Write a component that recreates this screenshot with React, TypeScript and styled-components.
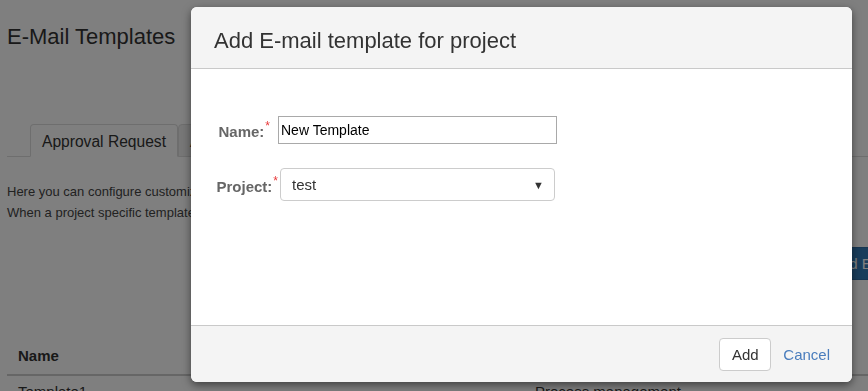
import React from "react";
import styled, { createGlobalStyle } from "styled-components";

const Global = createGlobalStyle`
  html, body {
    margin: 0;
    padding: 0;
    background: #ffffff;
    overflow: hidden;
    font-family: "Liberation Sans", Arial, sans-serif;
    color: #333;
  }
  * { box-sizing: border-box; }
`;

const Page = styled.div`
  width: 989px;
  padding: 0 7px;
`;

const Title = styled.h1`
  margin: 0;
  padding-top: 24px;
  font-size: 22px;
  font-weight: 400;
  line-height: 26px;
  color: #333;
`;

const TabBar = styled.ul`
  list-style: none;
  margin: 74px 0 0;
  padding: 0 0 0 23px;
  display: flex;
  border-bottom: 1px solid #ddd;
`;

const Tab = styled.li<{ $active?: boolean }>`
  height: 33px;
  margin-bottom: -1px;
  padding: 2px 11px 0 11px;
  display: flex;
  align-items: center;
  font-size: 15.6px;
  color: #333;
  background: ${(p) => (p.$active ? "#fff" : "#eee")};
  border: 1px solid #ddd;
  border-bottom-color: ${(p) => (p.$active ? "#fff" : "#ddd")};
  border-radius: 4px 4px 0 0;
`;

const Intro = styled.p`
  margin: 24px 0 0;
  font-size: 13px;
  line-height: 21px;
  color: #444;
`;

const ActionBar = styled.div`
  display: flex;
  justify-content: flex-end;
  margin-top: 24px;
`;

const PrimaryButton = styled.button`
  height: 33px;
  padding: 0 12px;
  font-family: "Liberation Sans", Arial, sans-serif;
  font-size: 15px;
  color: #fff;
  background: #337ab7;
  border: 1px solid #2e6da4;
  border-radius: 4px;
`;

const Table = styled.table`
  width: 100%;
  margin-top: 67px;
  border-collapse: collapse;
  table-layout: fixed;
  font-size: 15px;
`;

const HeadCell = styled.th<{ $width?: string }>`
  text-align: left;
  font-weight: 700;
  padding: 0 11px 10px;
  width: ${(p) => p.$width ?? "auto"};
  border-bottom: 2px solid #ccc;
  color: #333;
`;

const Cell = styled.td`
  padding: 7px 11px;
  color: #333;
  white-space: nowrap;
`;

const Overlay = styled.div`
  position: fixed;
  inset: 0;
  background: rgba(0, 0, 0, 0.5);
`;

const Modal = styled.div`
  position: fixed;
  left: 191px;
  top: 7px;
  width: 661px;
  height: 375px;
  display: flex;
  flex-direction: column;
  background: #fff;
  border-radius: 6px;
  overflow: hidden;
  box-shadow: 0 3px 9px rgba(0, 0, 0, 0.5);
`;

const ModalHeader = styled.div`
  height: 62px;
  padding: 21px 23px 0;
  background: #f4f4f4;
  border-bottom: 1px solid #c9c9c9;
`;

const ModalTitle = styled.h4`
  margin: 0;
  font-size: 22px;
  font-weight: 400;
  line-height: 26px;
  color: #333;
`;

const ModalBody = styled.div`
  flex: 1;
  padding-top: 47px;
  display: flex;
  flex-direction: column;
  gap: 24px;
`;

const FieldRow = styled.div`
  display: flex;
  align-items: center;
`;

const Label = styled.label<{ $width: number; $gap: number }>`
  width: ${(p) => p.$width}px;
  margin-right: ${(p) => p.$gap}px;
  text-align: right;
  font-size: 15px;
  font-weight: 700;
  color: #666;
  white-space: nowrap;
`;

const Required = styled.sup`
  color: #e8393a;
  font-size: 12px;
  font-weight: 400;
  margin-left: 1px;
  position: relative;
  top: -1px;
`;

const TextInput = styled.input`
  width: 279px;
  height: 28px;
  padding: 0 2px;
  font-family: "Liberation Sans", Arial, sans-serif;
  font-size: 14px;
  color: #000;
  border: 1px solid #a9a9a9;
  outline: none;
`;

const SelectBox = styled.div`
  width: 275px;
  height: 33px;
  padding: 0 10px 0 11px;
  display: flex;
  align-items: center;
  font-size: 15px;
  color: #333;
  border: 1px solid #ccc;
  border-radius: 4px;
  background: #fff;
`;

const Caret = styled.span`
  margin-left: auto;
  font-size: 11px;
  color: #333;
`;

const ModalFooter = styled.div`
  height: 57px;
  padding: 12px 22px 0 0;
  display: flex;
  justify-content: flex-end;
  align-items: flex-start;
  gap: 12px;
  background: #f4f4f4;
  border-top: 1px solid #c9c9c9;
`;

const DefaultButton = styled.button`
  height: 33px;
  width: 52px;
  font-family: "Liberation Sans", Arial, sans-serif;
  font-size: 15px;
  color: #333;
  background: #fff;
  border: 1px solid #ccc;
  border-radius: 4px;
  margin-left: -1px;
`;

const LinkButton = styled.button`
  height: 33px;
  padding: 0;
  font-family: "Liberation Sans", Arial, sans-serif;
  font-size: 15px;
  color: #4a7dbd;
  background: none;
  border: none;
`;

export default function App() {
  return (
    <>
      <Global />
      <Page>
        <Title>E-Mail Templates</Title>
        <TabBar>
          <Tab $active>Approval Request</Tab>
          <Tab>Approval Response</Tab>
        </TabBar>
        <Intro>
          Here you can configure customized e-mail templates for each project.
          <br />
          When a project specific template is defined, it is used instead of the default template.
        </Intro>
        <ActionBar>
          <PrimaryButton>Add E-Mail Template</PrimaryButton>
        </ActionBar>
        <Table>
          <thead>
            <tr>
              <HeadCell $width="517px">Name</HeadCell>
              <HeadCell>Project</HeadCell>
            </tr>
          </thead>
          <tbody>
            <tr>
              <Cell>Template1</Cell>
              <Cell>Process management</Cell>
            </tr>
          </tbody>
        </Table>
      </Page>
      <Overlay />
      <Modal>
        <ModalHeader>
          <ModalTitle>Add E-mail template for project</ModalTitle>
        </ModalHeader>
        <ModalBody>
          <FieldRow>
            <Label $width={79} $gap={8}>
              Name:<Required>*</Required>
            </Label>
            <TextInput defaultValue="New Template" />
          </FieldRow>
          <FieldRow>
            <Label $width={87} $gap={2}>
              Project:<Required>*</Required>
            </Label>
            <SelectBox>
              test
              <Caret>▼</Caret>
            </SelectBox>
          </FieldRow>
        </ModalBody>
        <ModalFooter>
          <DefaultButton>Add</DefaultButton>
          <LinkButton>Cancel</LinkButton>
        </ModalFooter>
      </Modal>
    </>
  );
}
